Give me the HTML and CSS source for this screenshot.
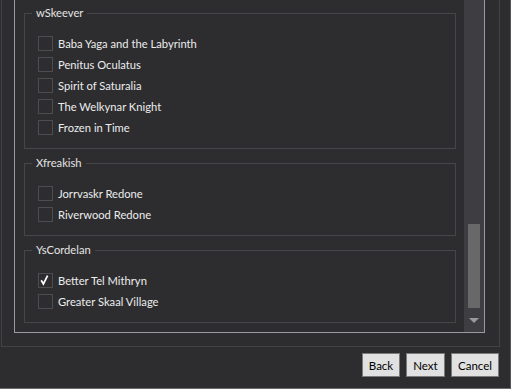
FILE: index.html
```html
<!DOCTYPE html>
<html lang="en">
<head>
    <meta charset="UTF-8">
    <meta name="viewport" content="width=device-width, initial-scale=1.0">
    <title>Select Mods</title>
    <link rel="stylesheet" href="styles.css">
</head>
<body>
    <div class="janela">
        <div class="painel">
            <div class="rolagem">
                <div class="grupos">
                    <fieldset class="grupo">
                        <legend>wSkeever</legend>
                        <label class="item"><span class="caixa"></span>Baba Yaga and the Labyrinth</label>
                        <label class="item"><span class="caixa"></span>Penitus Oculatus</label>
                        <label class="item"><span class="caixa"></span>Spirit of Saturalia</label>
                        <label class="item"><span class="caixa"></span>The Welkynar Knight</label>
                        <label class="item"><span class="caixa"></span>Frozen in Time</label>
                    </fieldset>
                    <fieldset class="grupo">
                        <legend>Xfreakish</legend>
                        <label class="item"><span class="caixa"></span>Jorrvaskr Redone</label>
                        <label class="item"><span class="caixa"></span>Riverwood Redone</label>
                    </fieldset>
                    <fieldset class="grupo">
                        <legend>YsCordelan</legend>
                        <label class="item"><span class="caixa marcada"><svg width="13" height="13" viewBox="0 0 13 13"><polyline points="2.2,6.2 4.4,10 8.6,1.6" fill="none" stroke="#fff" stroke-width="1.7"/></svg></span>Better Tel Mithryn</label>
                        <label class="item"><span class="caixa"></span>Greater Skaal Village</label>
                    </fieldset>
                </div>
                <div class="barra">
                    <div class="polegar"></div>
                    <div class="seta"></div>
                </div>
            </div>
        </div>
        <div class="botoes">
            <button class="back">Back</button>
            <button class="next">Next</button>
            <button class="cancel">Cancel</button>
        </div>
    </div>
</body>
</html>
```
FILE: styles.css
```css
* {
    box-sizing: border-box;
}

body {
    margin: 0;
    background-color: #2d2d30;
    font-family: Lato, "Liberation Sans", Arial, sans-serif;
    font-size: 11.2px;
    color: #ececec;
    overflow: hidden;
}

.janela {
    width: 511px;
    height: 389px;
    border-right: 1px solid #555558;
    border-bottom: 1px solid #6a6a6e;
}

.painel {
    margin-left: 1px;
    width: 499px;
    height: 347px;
    border: 1px solid #434346;
    border-top: none;
    padding: 0 14px 13px 12px;
}

.rolagem {
    display: flex;
    height: 333px;
    border: 1px solid #9a9aa2;
    border-top: none;
}

.grupos {
    flex: 1;
    padding: 5px 8px 0 9px;
}

.grupo {
    margin: 0 0 6px 0;
    padding: 12px 0 10px 7px;
    border: 1px solid #46464a;
    min-width: 0;
}

.grupo legend {
    padding: 0 4px;
    line-height: 16px;
    color: #e4e4e4;
}

.item {
    display: flex;
    align-items: center;
    height: 21px;
}

.caixa {
    width: 15px;
    height: 15px;
    margin: 0 5px 0 6px;
    border: 1px solid #4c4c51;
    background-color: #2d2d30;
}

.caixa svg {
    display: block;
}

.barra {
    width: 20px;
    background-color: #3e3e42;
    display: flex;
    flex-direction: column;
}

.polegar {
    margin: 224px 4px 0 4px;
    height: 84px;
    background-color: #686868;
}

.seta {
    margin: 10px auto 0 auto;
    width: 0;
    height: 0;
    border-left: 5px solid transparent;
    border-right: 5px solid transparent;
    border-top: 5px solid #9a9a9e;
}

.botoes {
    display: flex;
    justify-content: flex-end;
    gap: 6px;
    padding: 6px 11px 0 0;
}

button {
    height: 24px;
    padding: 0;
    background-color: #e1e1e1;
    border: 1px solid #7a7a7a;
    border-radius: 0;
    font-family: Lato, "Liberation Sans", Arial, sans-serif;
    font-size: 11.5px;
    color: #000;
}

.back {
    width: 38px;
}

.next {
    width: 39px;
}

.cancel {
    width: 48px;
}
```
